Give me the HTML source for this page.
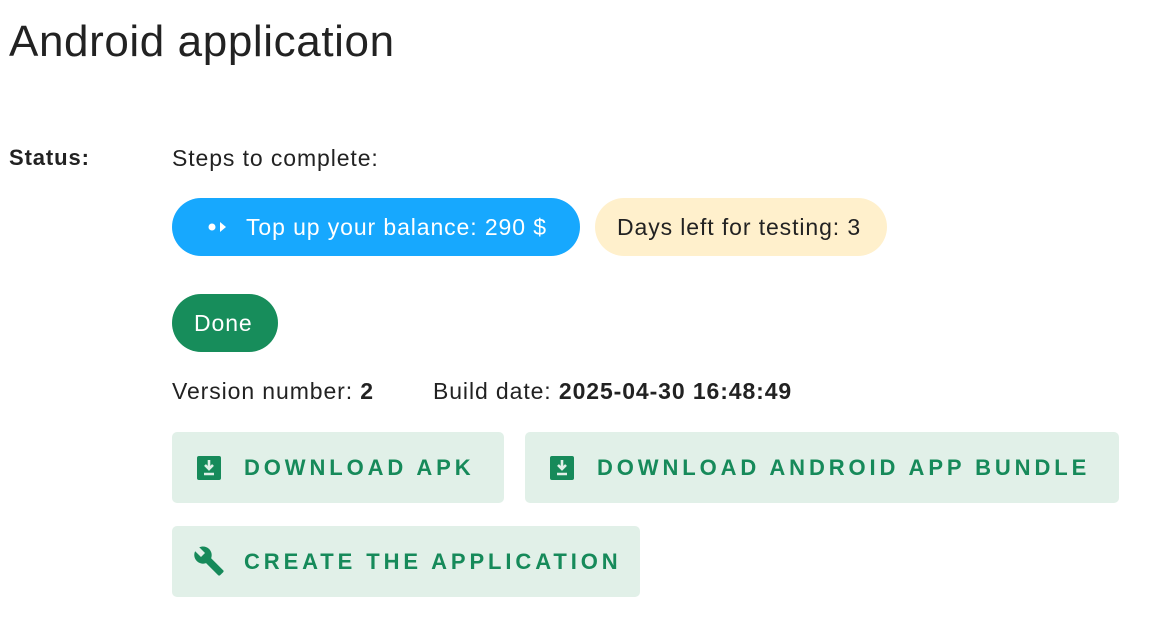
<!DOCTYPE html>
<html><head><style>
body{margin:0;width:1162px;height:644px;background:#fff;font-family:"Liberation Sans",sans-serif;color:#222;position:relative;overflow:hidden}
.a{position:absolute;white-space:nowrap;letter-spacing:0.9px}
h1{position:absolute;left:9px;top:17px;margin:0;font-weight:normal;font-size:44px;letter-spacing:0.6px;color:#222}
.pill{position:absolute;height:58px;border-radius:29px;font-size:23px;line-height:58px;box-sizing:border-box;letter-spacing:0.9px;white-space:nowrap}
.btn{position:absolute;height:71px;background:#e1f0e8;border-radius:5px;color:#168a5a;font-size:22px;font-weight:bold;letter-spacing:3.9px;line-height:71px;box-sizing:border-box;padding-left:72px;white-space:nowrap}
.ic{position:absolute;left:25px;top:24px}
</style></head><body>
<h1>Android application</h1>
<div class="a" style="left:9px;top:145px;font-size:22px;font-weight:bold">Status:</div>
<div class="a" style="left:172px;top:145px;font-size:23px">Steps to complete:</div>
<div class="pill" style="left:172px;top:198px;width:408px;background:#17a8fe;color:#fff;padding-left:74px">Top up your balance: 290 $
<svg style="position:absolute;left:35px;top:22px" width="22" height="14"><circle cx="5" cy="7" r="3.5" fill="#fff"/><path d="M13 2 L19 7 L13 12Z" fill="#fff"/></svg></div>
<div class="pill" style="left:595px;top:198px;width:292px;background:#fff0cc;color:#222;padding-left:22px">Days left for testing: 3</div>
<div class="pill" style="left:172px;top:294px;width:106px;background:#178d5b;color:#fff;padding-left:22px">Done</div>
<div class="a" style="left:172px;top:378px;font-size:23px">Version number: <b>2</b></div>
<div class="a" style="left:433px;top:378px;font-size:23px">Build date: <b>2025-04-30 16:48:49</b></div>
<div class="btn" style="left:172px;top:432px;width:332px"><svg class="ic" width="24" height="24"><rect width="24" height="24" rx="2" fill="#168a5a"/><path d="M12 4v8M8 9l4 4 4-4M7 18h10" stroke="#e1f0e8" stroke-width="2.6" fill="none"/></svg>DOWNLOAD APK</div>
<div class="btn" style="left:525px;top:432px;width:594px;padding-left:72px"><svg class="ic" width="24" height="24"><rect width="24" height="24" rx="2" fill="#168a5a"/><path d="M12 4v8M8 9l4 4 4-4M7 18h10" stroke="#e1f0e8" stroke-width="2.6" fill="none"/></svg>DOWNLOAD ANDROID APP BUNDLE</div>
<div class="btn" style="left:172px;top:526px;width:468px"><svg class="ic" style="left:21px;top:19px" width="32" height="32" viewBox="0 0 24 24"><path d="M22.7 19l-9.1-9.1c.9-2.3.4-5-1.5-6.9-2-2-5-2.4-7.4-1.3L9 6 6 9 1.6 4.7C.4 7.1.9 10.1 2.9 12.1c1.9 1.9 4.6 2.4 6.9 1.5l9.1 9.1c.4.4 1 .4 1.4 0l2.3-2.3c.5-.4.5-1.1.1-1.4z" fill="#168a5a"/></svg>CREATE THE APPLICATION</div>
</body></html>
